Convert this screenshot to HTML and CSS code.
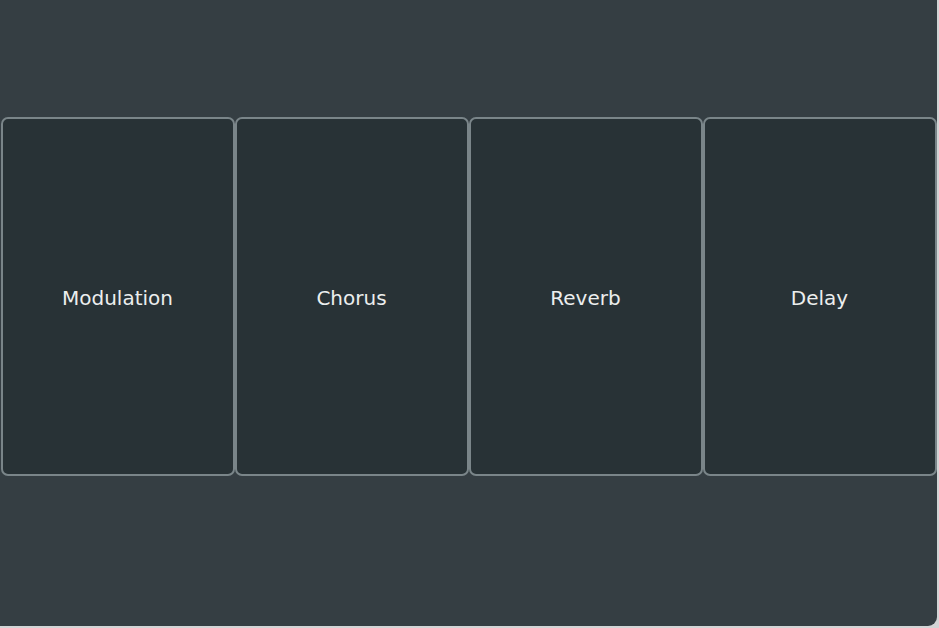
FILE: index.html
```html
<!DOCTYPE html>
<html>
<head>
<meta charset="utf-8">
<link rel="stylesheet" href="styles.css">
</head>
<body>
<div class="panel">
  <div class="cards">
    <div class="card">Modulation</div>
    <div class="card">Chorus</div>
    <div class="card">Reverb</div>
    <div class="card">Delay</div>
  </div>
</div>
</body>
</html>
```
FILE: styles.css
```css
html, body {
  margin: 0;
  padding: 0;
  background: #d3d5d6;
}
body {
  width: 939px;
  height: 628px;
  overflow: hidden;
}
.panel {
  width: 937px;
  height: 626px;
  background: #353e43;
  border-bottom-right-radius: 9px;
  box-sizing: border-box;
  padding: 117px 0 0 0.5px;
}
.cards {
  display: flex;
}
.card {
  width: 234px;
  height: 359px;
  box-sizing: border-box;
  background: #283236;
  border: 2px solid #7a8589;
  border-radius: 7px;
  display: flex;
  align-items: center;
  justify-content: center;
  color: #eceeee;
  font-family: "DejaVu Sans", Verdana, sans-serif;
  font-size: 20px;
  padding-top: 2px;
}
```
